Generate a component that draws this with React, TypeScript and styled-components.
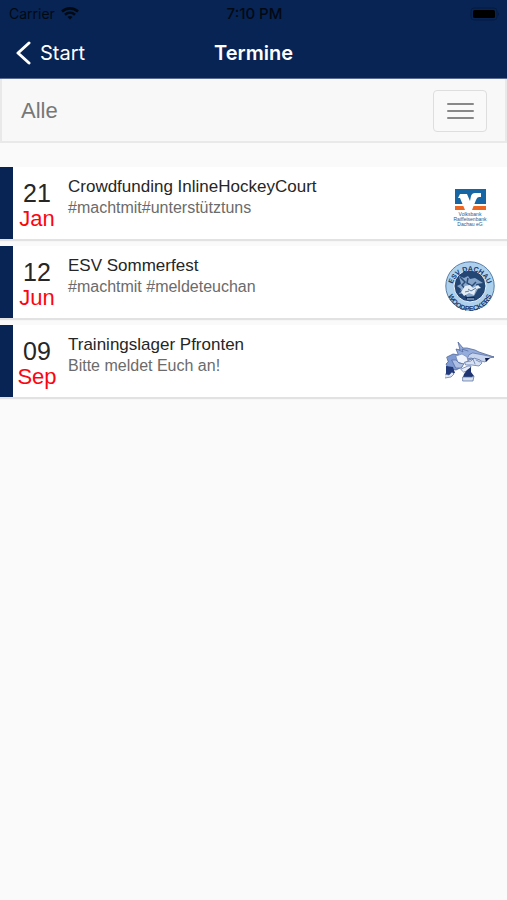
import React from "react";
import styled, { createGlobalStyle } from "styled-components";

const NAVY = "#072454";

const GlobalStyle = createGlobalStyle`
  * { box-sizing: border-box; }
  body {
    margin: 0;
    background: #fafafa;
    color: #262626;
    font-family: "Liberation Sans", Arial, sans-serif;
  }
`;

const Header = styled.header`
  background: ${NAVY};
  font-family: Inter, sans-serif;
  border-bottom: 1px solid #5a6d90;
`;

const StatusBar = styled.div`
  display: grid;
  grid-template-columns: 1fr auto 1fr;
  align-items: center;
  height: 27px;
  padding: 0 7px 0 9px;
  color: #020913;
  font-size: 14px;
  line-height: 16px;
`;

const Carrier = styled.div`
  display: flex;
  align-items: center;
  gap: 6px;
`;

const Clock = styled.time`
  font-size: 15px;
  font-weight: 500;
`;

const Battery = styled.svg`
  justify-self: end;
`;

const NavBar = styled.nav`
  display: grid;
  grid-template-columns: 1fr auto 1fr;
  align-items: center;
  height: 51px;
  padding: 0 16px;
  color: #fff;
`;

const BackLink = styled.a`
  display: flex;
  align-items: center;
  gap: 9px;
  color: #fff;
  font-size: 20px;
  line-height: 24px;
  text-decoration: none;
`;

const Title = styled.h1`
  margin: 0;
  font-size: 20px;
  line-height: 24px;
  font-weight: 600;
`;

const FilterBar = styled.div`
  display: flex;
  align-items: center;
  justify-content: space-between;
  height: 64px;
  padding: 2px 18px 0 19px;
  background: #f8f8f8;
  border: 2px solid #e9e9e9;
  border-top-width: 0;
`;

const FilterName = styled.span`
  color: #777;
  font-size: 22px;
  line-height: 28px;
`;

const MenuButton = styled.button`
  display: flex;
  flex-direction: column;
  align-items: center;
  justify-content: center;
  gap: 5px;
  width: 54px;
  height: 42px;
  padding: 0;
  background: #f9f9f9;
  border: 1px solid #dedede;
  border-radius: 4px;
`;

const MenuLine = styled.span`
  width: 27px;
  height: 2px;
  border-radius: 1px;
  background: #888;
`;

const EventList = styled.ul`
  display: flex;
  flex-direction: column;
  gap: 7px;
  margin: 24px 0;
  padding: 0;
  list-style: none;
`;

const EventRow = styled.li`
  display: flex;
  align-items: center;
  height: 72px;
  padding-right: 12px;
  background: #fff;
  border-left: 13px solid ${NAVY};
  box-shadow: 0 2px 1px #e2e2e2;
`;

const EventDate = styled.time`
  display: flex;
  flex-direction: column;
  align-items: center;
  width: 48px;
  font-size: 22px;
  line-height: 26px;
  padding-top: 5px;
`;

const Day = styled.span`
  font-size: 25px;
`;

const Month = styled.span`
  color: #fb0510;
`;

const EventText = styled.div`
  flex: 1;
  align-self: flex-start;
  padding: 9px 0 0 7px;
`;

const EventTitle = styled.h2`
  margin: 0;
  font-size: 17px;
  line-height: 22px;
  font-weight: 400;
`;

const EventNote = styled.p`
  margin: 0;
  color: #6b6b6b;
  font-size: 16px;
  line-height: 20px;
`;

const LogoLabel = styled.text`
  font: 400 5px "Liberation Sans", Arial, sans-serif;
  fill: #1a5c94;
  text-anchor: middle;
`;

const BadgeLabel = styled.text`
  font: 700 7px "Liberation Sans", Arial, sans-serif;
  fill: #19386a;
  text-anchor: middle;
`;

const BankLogo = () => (
  <svg width="50" height="50" viewBox="0 0 50 50" role="img" aria-label="Volksbank Raiffeisenbank Dachau eG">
    <path d="M10 11h31v15H10z" fill="#1765a3" />
    <path d="M10 28h31v4H10z" fill="#ec6724" />
    <path d="M15 16h7l3 7 1-5q1-3 4-3h6v4h-2q-2 0-3 3l-4 10h-7l-5-12h-2z" fill="#fff" />
    <LogoLabel x="25" y="38">Volksbank</LogoLabel>
    <LogoLabel x="25" y="43">Raiffeisenbank</LogoLabel>
    <LogoLabel x="25" y="48">Dachau eG</LogoLabel>
  </svg>
);

const ClubBadge = () => (
  <svg width="50" height="58" viewBox="0 -8 50 58" role="img" aria-label="ESV Dachau Woodpeckers">
    <defs>
      <path id="badge-top" d="M7 28A18 18 0 1 1 43 28" />
      <path id="badge-bottom" d="M2 27A23 23 0 0 0 48 27" />
    </defs>
    <circle cx="25" cy="25" r="24.2" fill="#add0ec" stroke="#577da8" strokeWidth="1" />
    <circle cx="25" cy="25" r="16" fill="#234675" stroke="#edf5fb" strokeWidth="1" />
    <path d="M14 15l5 2 4-2 2 3 5-1 8 5-7 1 2 5-4 7-7 1-2-4-6 1 2-5-4-3 4-2z" fill="#86a5c9" />
    <path d="M15 16l5 5-3 3 4 5-7 2M23 17l-1 5 5 3 4-4" fill="none" stroke="#2b4c79" strokeWidth="1.5" />
    <path d="M20 25l5-1 3 3 5-3 3 3-5 1-2 6-5-2-5 3-3-4z" fill="#e4edf5" />
    <path d="M23 28l3 2 5-3M20 31l4-1" fill="none" stroke="#5c7ba1" />
    <path d="M20 36h10l-2 3h-6z" fill="#0e2856" />
    <path d="M22 38h7" stroke="#bfd4e8" />
    <BadgeLabel><textPath href="#badge-top" startOffset="50%">ESV DACHAU</textPath></BadgeLabel>
    <BadgeLabel><textPath href="#badge-bottom" startOffset="50%">WOODPECKERS</textPath></BadgeLabel>
  </svg>
);

const Mascot = () => (
  <svg width="50" height="50" viewBox="0 0 50 50" role="img" aria-label="Woodpecker" strokeLinejoin="round" strokeLinecap="round">
    <path d="M2 21l6-3 6 1 4 5-1 7-6 3-8-2-2-4 2-2z" fill="#809bd3" stroke="#41598f" strokeWidth=".7" />
    <path d="M1 30l7 1 2 6-4 1-1 3-4-2z" fill="#22397a" />
    <path d="M0 38l4 1 3-3 2 2-3 3-6 1z" fill="#dfe7f5" stroke="#435b91" strokeWidth=".6" />
    <path d="M13 18l-2-5 4 1-2-8 5 6 4 0 8 2 4 2 15 5-12 1-4 3-6-2-8 3-5-3z" fill="#94acdc" stroke="#455c92" strokeWidth=".7" />
    <path d="M14 14l4 2-1-3 6 2" fill="none" stroke="#455c92" strokeWidth=".6" />
    <path d="M28 17l21 4-5 1-4 4-8-2-6-2-4 1 2-4z" fill="#c7d4ee" stroke="#596f9f" strokeWidth=".7" />
    <path d="M40 22l5 0-4 4z" fill="#101d4c" />
    <path d="M11 20l6-2 5 3 1 4-5 3-5-2z" fill="#eef3fc" stroke="#7188b8" strokeWidth=".7" />
    <path d="M7 24l4 0 3 3 5 1-3 4-5 0z" fill="#aebfe3" stroke="#536ca1" strokeWidth=".7" />
    <path d="M20 26l6-1 3-3 6 2 2 3-3 3-7-1-6 0z" fill="#d7e1f3" stroke="#526a9d" strokeWidth=".7" />
    <path d="M28 23l2 5M31 24l4 2" stroke="#526a9d" strokeWidth=".7" />
    <path d="M16 33l7-3 3 0-1 4-6 2z" fill="#e6edf9" stroke="#536ca1" strokeWidth=".7" />
    <path d="M22 34l4-3 0 5 3 4-2 1-9 0 1-3z" fill="#203571" />
    <path d="M18 41l9 0 2-1-1 5-10 0z" fill="#d6dfee" stroke="#526a9d" strokeWidth=".7" />
  </svg>
);

const events = [
  { day: "21", month: "Jan", title: "Crowdfunding InlineHockeyCourt", note: "#machtmit#unterstütztuns", Logo: BankLogo },
  { day: "12", month: "Jun", title: "ESV Sommerfest", note: "#machtmit #meldeteuchan", Logo: ClubBadge },
  { day: "09", month: "Sep", title: "Trainingslager Pfronten", note: "Bitte meldet Euch an!", Logo: Mascot },
];

export default function App() {
  return (
    <>
      <GlobalStyle />
      <Header>
        <StatusBar>
          <Carrier>
            Carrier
            <svg width="18" height="13" viewBox="0 0 18 13" fill="none" stroke="currentColor" strokeWidth="2.6" aria-hidden="true">
              <path d="M1 4.5C5.5.3 12.5.3 17 4.5M4 7.7c3-2.7 7-2.7 10 0" />
              <path d="M9 12.5L6.5 10c1.5-1.3 3.5-1.3 5 0z" fill="currentColor" stroke="none" />
            </svg>
          </Carrier>
          <Clock>7:10 PM</Clock>
          <Battery width="30" height="14" viewBox="0 0 30 14" aria-hidden="true">
            <rect x="1" y="1" width="26" height="12" rx="3" fill="none" stroke="#061b40" />
            <rect x="3" y="3" width="22" height="8" rx="1.5" fill="#000" />
            <path d="M28 5q2 2 0 4z" fill="#061b40" />
          </Battery>
        </StatusBar>
        <NavBar>
          <BackLink href="#start">
            <svg width="15" height="24" viewBox="0 0 15 24" fill="none" stroke="currentColor" strokeWidth="3" strokeLinecap="round" strokeLinejoin="round" aria-hidden="true">
              <path d="M13 2L2 12l11 10" />
            </svg>
            Start
          </BackLink>
          <Title>Termine</Title>
        </NavBar>
      </Header>
      <main>
        <FilterBar>
          <FilterName>Alle</FilterName>
          <MenuButton type="button" aria-label="Filter">
            <MenuLine />
            <MenuLine />
            <MenuLine />
          </MenuButton>
        </FilterBar>
        <EventList>
          {events.map(({ day, month, title, note, Logo }) => (
            <EventRow key={title}>
              <EventDate>
                <Day>{day}</Day>
                <Month>{month}</Month>
              </EventDate>
              <EventText>
                <EventTitle>{title}</EventTitle>
                <EventNote>{note}</EventNote>
              </EventText>
              <Logo />
            </EventRow>
          ))}
        </EventList>
      </main>
    </>
  );
}
